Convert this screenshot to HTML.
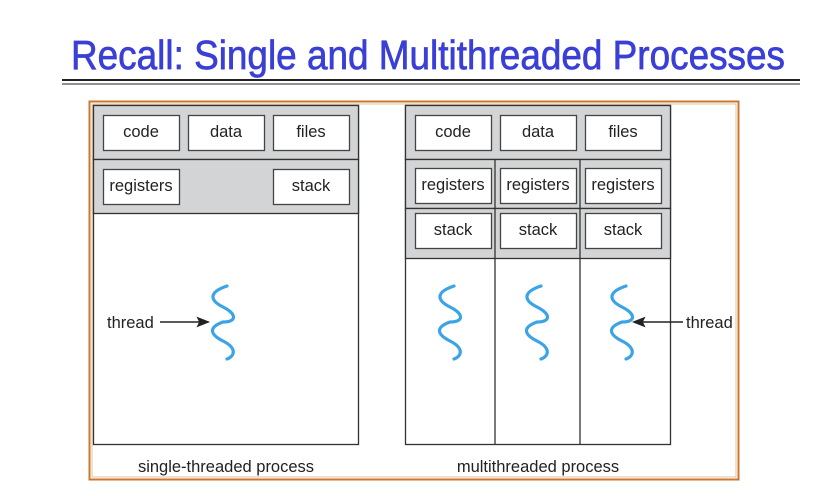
<!DOCTYPE html>
<html><head><meta charset="utf-8"><style>
html,body{margin:0;padding:0;background:#fff;width:828px;height:496px;overflow:hidden}
</style></head><body>
<svg width="828" height="496" xmlns="http://www.w3.org/2000/svg" font-family="Liberation Sans, sans-serif">
<text x="71" y="69" font-size="41" fill="#3a3fd6" stroke="#3a3fd6" stroke-width="0.7" textLength="714" lengthAdjust="spacingAndGlyphs">Recall: Single and Multithreaded Processes</text>
<rect x="62" y="79" width="738" height="2" fill="#222"/>
<rect x="62" y="83.5" width="738" height="1" fill="#222"/>
<rect x="89.5" y="101.5" width="649" height="378" fill="none" stroke="#c87830" stroke-width="2"/>
<rect x="92" y="104" width="644" height="373" fill="none" stroke="#e0b080" stroke-width="0.8"/>
<g stroke="#333" stroke-width="1.3">
<rect x="93.5" y="105.5" width="265" height="339" fill="#fff"/>
<rect x="93.5" y="105.5" width="265" height="54" fill="#d3d4d5"/>
<rect x="93.5" y="159.5" width="265" height="54" fill="#d3d4d5"/>
<rect x="405.5" y="105.5" width="265" height="339" fill="#fff"/>
<rect x="405.5" y="105.5" width="265" height="54" fill="#d3d4d5"/>
<rect x="405.5" y="159.5" width="265" height="49" fill="#d3d4d5"/>
<rect x="405.5" y="208.5" width="265" height="50" fill="#d3d4d5"/>
<line x1="495" y1="159.5" x2="495" y2="444"/>
<line x1="580" y1="159.5" x2="580" y2="444"/>
</g>
<g fill="#fff" stroke="#444" stroke-width="1.3">
<rect x="103.5" y="115.5" width="76" height="35"/>
<rect x="188.5" y="115.5" width="76" height="35"/>
<rect x="273.5" y="115.5" width="76" height="35"/>
<rect x="103.5" y="169.5" width="76" height="35"/>
<rect x="273.5" y="169.5" width="76" height="35"/>
<rect x="415.5" y="115.5" width="76" height="35"/>
<rect x="500.5" y="115.5" width="76" height="35"/>
<rect x="585.5" y="115.5" width="76" height="35"/>
<rect x="415.5" y="168.5" width="76" height="35"/>
<rect x="500.5" y="168.5" width="76" height="35"/>
<rect x="585.5" y="168.5" width="76" height="35"/>
<rect x="415.5" y="213.5" width="76" height="35"/>
<rect x="500.5" y="213.5" width="76" height="35"/>
<rect x="585.5" y="213.5" width="76" height="35"/>
</g>
<g font-size="16.5" fill="#222" text-anchor="middle">
<text x="141" y="137">code</text><text x="226" y="137">data</text><text x="311" y="137">files</text>
<text x="141" y="191">registers</text><text x="311" y="191">stack</text>
<text x="453" y="137">code</text><text x="538" y="137">data</text><text x="623" y="137">files</text>
<text x="453" y="190">registers</text><text x="538" y="190">registers</text><text x="623" y="190">registers</text>
<text x="453" y="235">stack</text><text x="538" y="235">stack</text><text x="623" y="235">stack</text>
<text x="226" y="472">single-threaded process</text>
<text x="538" y="472">multithreaded process</text>
</g>
<g font-size="16.5" fill="#222">
<text x="107" y="328">thread</text><text x="686" y="328">thread</text>
</g>
<defs><path id="sq" d="M4,-36 C-14,-30 -14,-22 0,-15 C14,-8 14,0 0,0 C-14,5 -14,12 0,19 C14,26 12,34 4,37" fill="none" stroke="#3aa4e6" stroke-width="3.2" stroke-linecap="round"/></defs>
<use href="#sq" x="223" y="322"/>
<use href="#sq" x="450" y="322"/>
<use href="#sq" x="537" y="322"/>
<use href="#sq" x="622" y="322"/>
<g stroke="#222" stroke-width="1.5" fill="#222">
<line x1="160" y1="322" x2="200" y2="322"/><path d="M208,322 L198,318 L200,322 L198,326Z"/>
<line x1="683" y1="322" x2="642" y2="322"/><path d="M634,322 L644,318 L642,322 L644,326Z"/>
</g>
</svg>
</body></html>
